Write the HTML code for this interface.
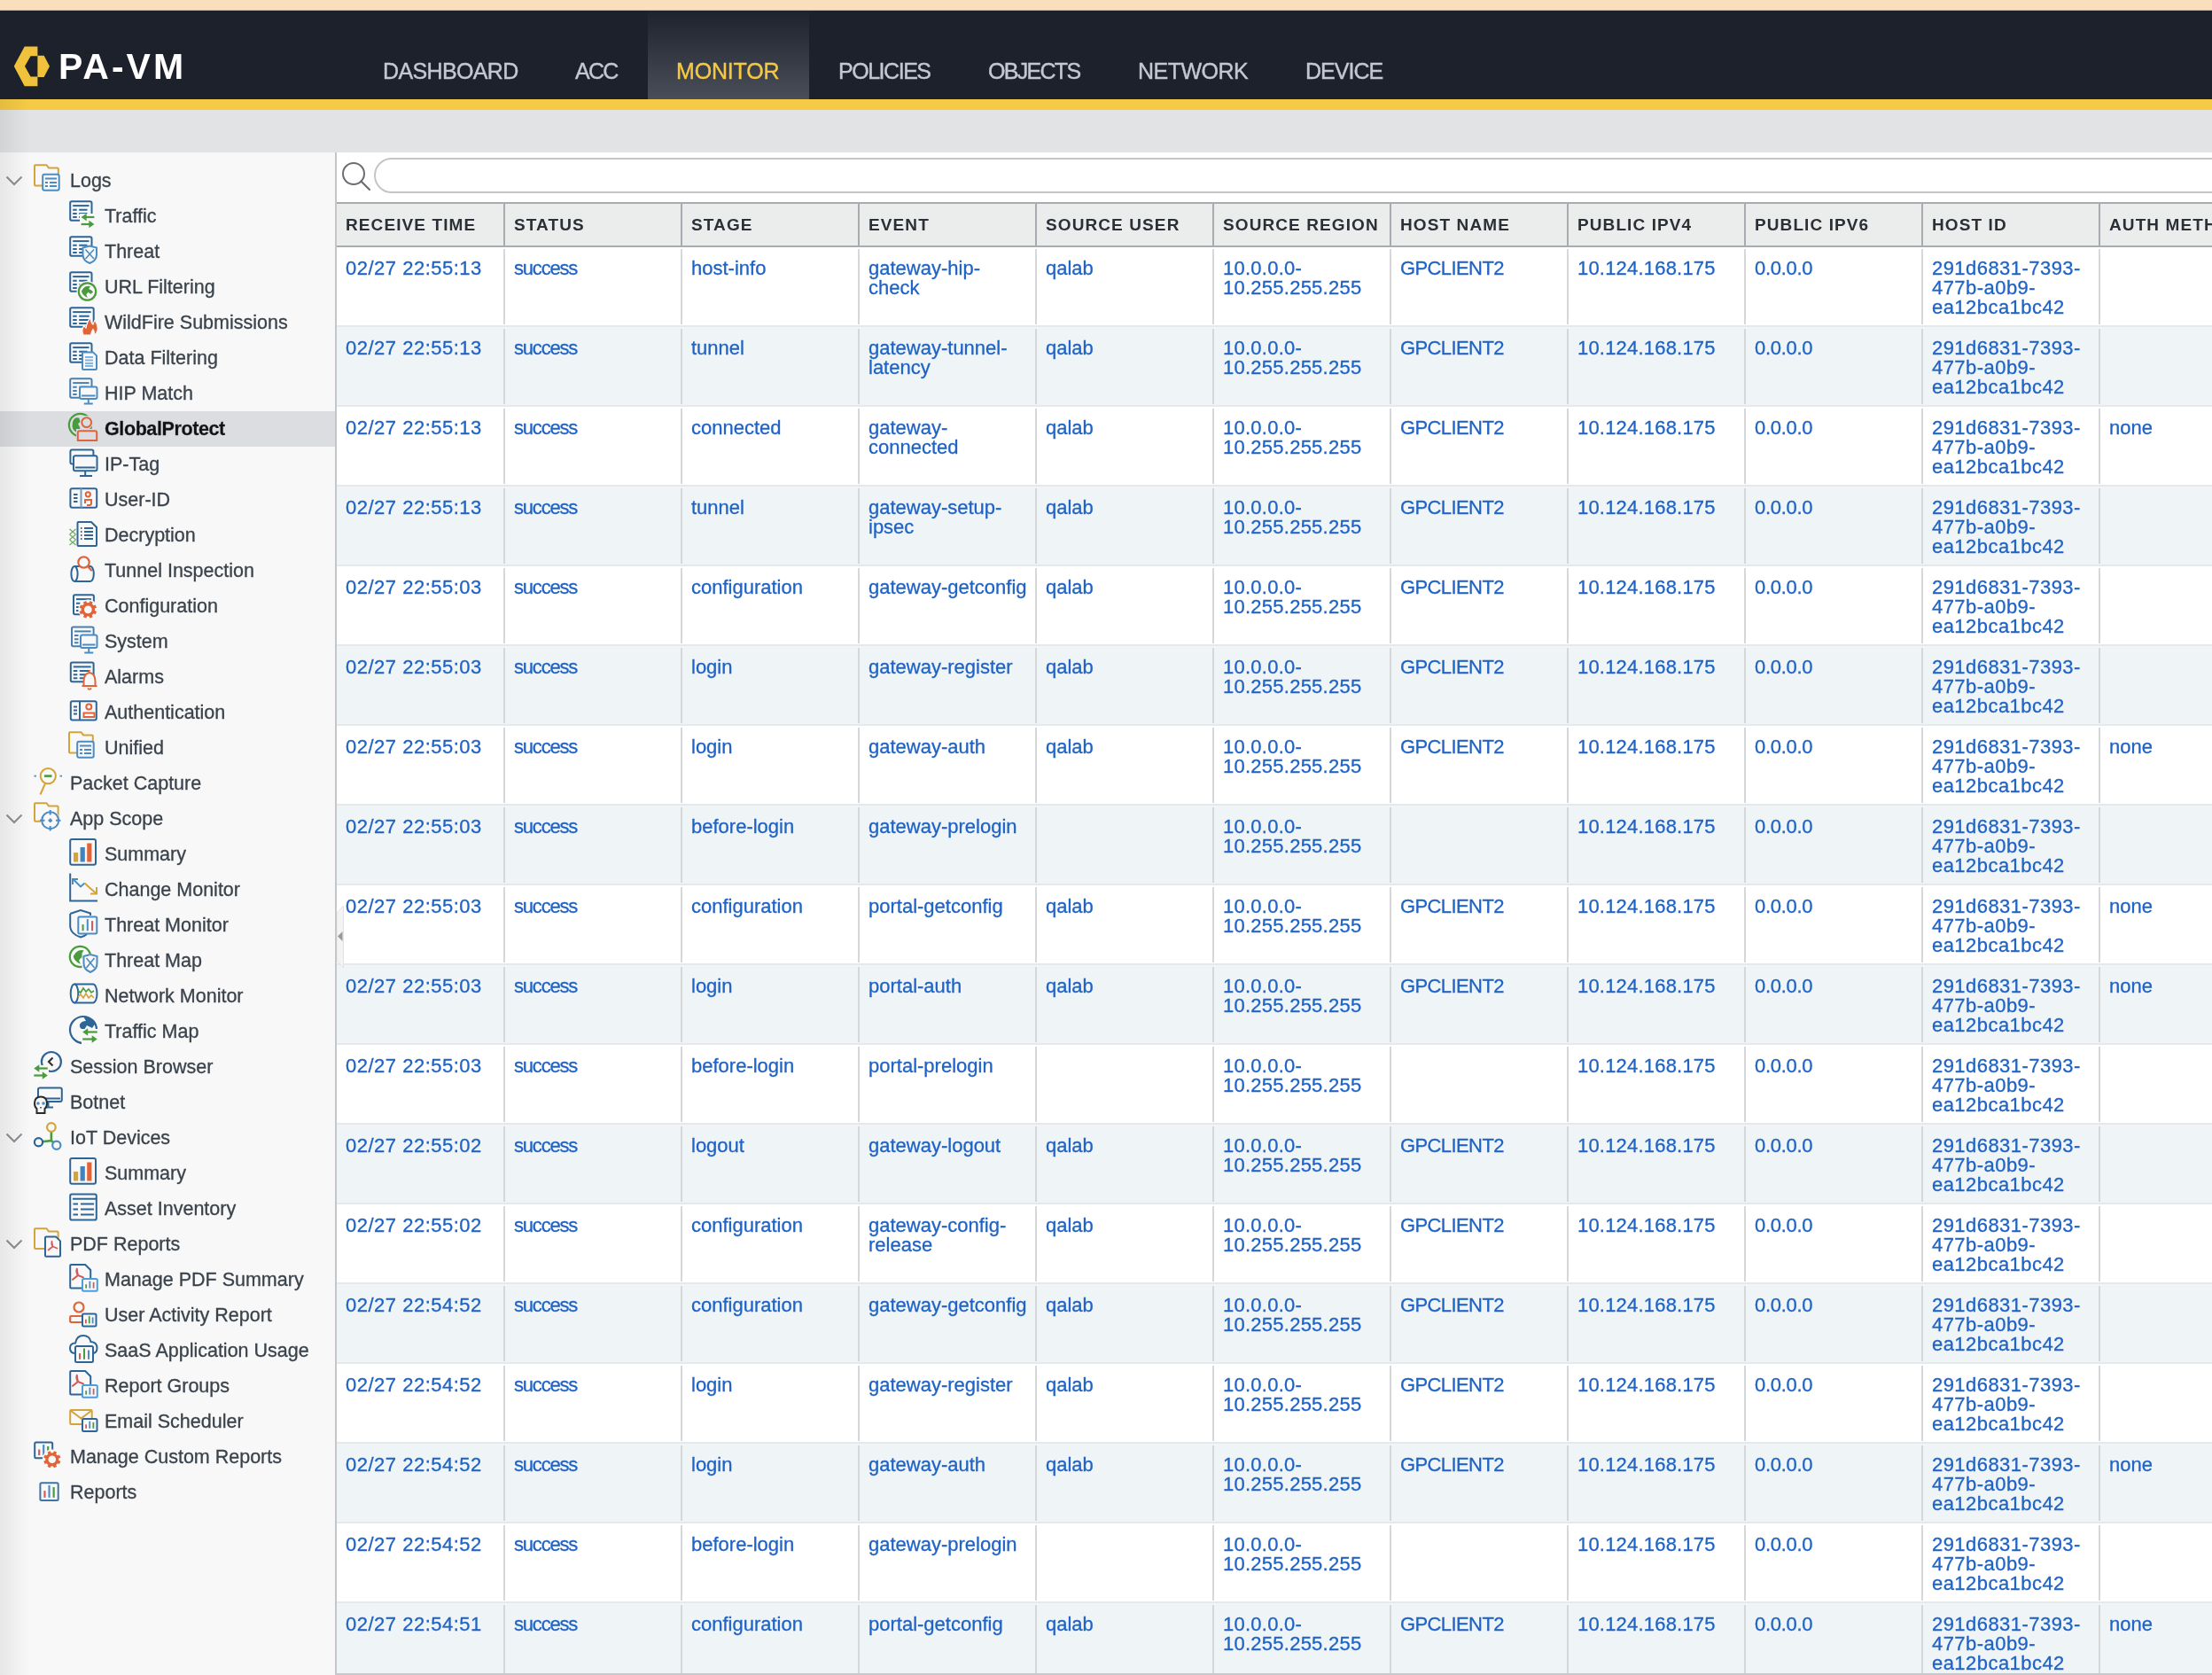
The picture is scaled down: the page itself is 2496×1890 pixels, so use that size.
<!DOCTYPE html><html><head><meta charset="utf-8"><title>PA-VM Monitor</title><style>
*{margin:0;padding:0;box-sizing:border-box}
html,body{width:2496px;height:1890px;overflow:hidden;background:#fff;font-family:"Liberation Sans",sans-serif;-webkit-font-smoothing:antialiased}
#wrap{position:absolute;left:0;top:0;width:2496px;height:1890px;will-change:transform}
.a{position:absolute}
#peach{left:0;top:0;width:2496px;height:12px;background:#f9dfbc;border-bottom:1px solid #c9b597}
#nav{left:0;top:12px;width:2496px;height:100px;background:#1c212c}
#yel{left:0;top:112px;width:2496px;height:12px;background:#f6ca44}
#gbar{left:0;top:124px;width:2496px;height:48px;background:#e2e3e5}
.nv{top:12px;height:99px;font-size:25px;color:#c4c8d1;line-height:99px;padding-top:19px;white-space:nowrap}
#act{left:731px;top:12px;width:182px;height:100px;background:linear-gradient(#1f232d 0%,#2a2f3a 30%,#3c414c 70%,#4a4e59 100%)}
#side{left:0;top:172px;width:378px;height:1718px;background:#f8f8f8}
#sshade{left:0;top:112px;width:34px;height:1778px;background:linear-gradient(90deg,rgba(0,0,0,0.07),rgba(0,0,0,0))}
#sbord{left:378px;top:172px;width:2px;height:1718px;background:#c4c6ca}
.si{height:40px;line-height:40px;font-size:21.5px;color:#3a434c;-webkit-text-stroke:0.3px #3a434c;white-space:nowrap}
.sel{background:#dcdde0}
.ic{width:36px;height:36px;overflow:visible}
.chev{left:6px;width:20px;height:12px}
.hd{top:228px;height:51px;background:#ebedec;border-top:2px solid #a8acb0;border-bottom:2px solid #a8acb0}
.hs{top:228px;width:2px;height:51px;background:#a8acb0}
.ht{top:246px;font-size:19px;font-weight:bold;color:#2b3036;letter-spacing:1.1px;white-space:nowrap;line-height:16px}
.row{left:380px;width:2116px;height:90px}
.rs{width:2px;background:#d6d7d9}
.rb{left:380px;width:2116px;height:2px;background:#e6e8ea}
.c{font-size:22px;line-height:22px;color:#1f63c5;-webkit-text-stroke:0.3px #1f63c5;white-space:nowrap}
</style></head><body>
<div id="wrap">
<div class="a" id="peach"></div><div class="a" id="nav"></div><div class="a" id="yel"></div><div class="a" id="gbar"></div>
<div class="a" id="act"></div>
<svg class="a" style="left:0;top:0" width="70" height="110" viewBox="0 0 70 110"><path d="M42.4 52.6 L27.7 52.6 L15.8 74.8 L27.7 97.2 L42.4 97.2 L42.4 86.5 L34.5 86.5 L28 74.8 L34.5 63.3 L42.4 63.3 Z" fill="#f0c23b"/><path d="M42.4 62.8 L49.6 62.8 L56 74.8 L49.6 87 L42.4 87 Z" fill="#f0c23b"/></svg>
<div class="a" style="left:66px;top:53px;font-size:41px;font-weight:bold;color:#fff;line-height:44px;letter-spacing:3px">PA-VM</div>
<div class="a nv" style="left:432px;color:#c4c8d1;letter-spacing:-0.64px;-webkit-text-stroke:0.4px #c4c8d1">DASHBOARD</div>
<div class="a nv" style="left:649px;color:#c4c8d1;letter-spacing:-1.75px;-webkit-text-stroke:0.4px #c4c8d1">ACC</div>
<div class="a nv" style="left:763px;color:#f5c843;letter-spacing:-0.17px;-webkit-text-stroke:0.4px #f5c843">MONITOR</div>
<div class="a nv" style="left:946px;color:#c4c8d1;letter-spacing:-1.47px;-webkit-text-stroke:0.4px #c4c8d1">POLICIES</div>
<div class="a nv" style="left:1115px;color:#c4c8d1;letter-spacing:-1.7px;-webkit-text-stroke:0.4px #c4c8d1">OBJECTS</div>
<div class="a nv" style="left:1284px;color:#c4c8d1;letter-spacing:-0.5px;-webkit-text-stroke:0.4px #c4c8d1">NETWORK</div>
<div class="a nv" style="left:1473px;color:#c4c8d1;letter-spacing:-0.96px;-webkit-text-stroke:0.4px #c4c8d1">DEVICE</div>
<div class="a" id="side"></div>
<svg class="a chev" style="top:198px" viewBox="0 0 20 12"><path d="M1.5 1.5 L10 10 L18.5 1.5" fill="none" stroke="#8a8f95" stroke-width="2"/></svg>
<svg class="a ic" style="left:38px;top:184px" viewBox="0 0 36 36"><path d="M27.8 25.599999999999998 V6.4 Q27.8 5.4 26.8 5.4 H17 L14.5 2.2 H2 Q1 2.2 1 3.2 V24.599999999999998 Q1 25.599999999999998 2 25.599999999999998 H27.8" fill="none" stroke="#d4a33a" stroke-width="2"/><rect x="10.2" y="12.8" width="18.5" height="18" rx="2" fill="#f8f8f8" stroke="#4b8cc4" stroke-width="2"/><path d="M13 17.5 H26 M13 22 H16 M18 22 H26 M13 26 H16 M18 26 H26" stroke="#4b8cc4" stroke-width="2"/></svg>
<div class="a si" style="left:79px;top:184px;">Logs</div>
<svg class="a ic" style="left:77px;top:224px" viewBox="0 0 36 36"><rect x="2.2" y="3.3" width="24.3" height="21.4" rx="1.8" fill="none" stroke="#2e6597" stroke-width="2"/><path d="M5.2 8.1 H23.5" stroke="#2e6597" stroke-width="2"/><path d="M5.2 12.8 H9.7 M12.2 12.8 H21.5 M5.2 16.9 H9.7 M12.2 16.9 H21.5 M5.2 21.0 H9.7 M12.2 21.0 H21.5 " stroke="#2e6597" stroke-width="2"/><rect x="13" y="17" width="20" height="16" fill="#f8f8f8"/><path d="M18.6 21 H29.4" stroke="#4a9a3e" stroke-width="2.2"/><path d="M20.6 16.8 L14.6 21 L20.6 25.2 Z" fill="#4a9a3e"/><path d="M14.6 29 H25.4" stroke="#4a9a3e" stroke-width="2.2"/><path d="M23.4 24.8 L29.4 29 L23.4 33.2 Z" fill="#4a9a3e"/></svg>
<div class="a si" style="left:118px;top:224px;">Traffic</div>
<svg class="a ic" style="left:77px;top:264px" viewBox="0 0 36 36"><rect x="2.2" y="3.3" width="24.3" height="21.4" rx="1.8" fill="none" stroke="#2e6597" stroke-width="2"/><path d="M5.2 8.1 H23.5" stroke="#2e6597" stroke-width="2"/><path d="M5.2 12.8 H9.7 M12.2 12.8 H21.5 M5.2 16.9 H9.7 M12.2 16.9 H21.5 M5.2 21.0 H9.7 M12.2 21.0 H21.5 " stroke="#2e6597" stroke-width="2"/><path d="M16.5 15.5 L24.25 13.5 L32.0 15.5 V23.25 Q32.0 30.075 24.25 33.0 Q16.5 30.075 16.5 23.25 Z" fill="#f8f8f8" stroke="#4b8cc4" stroke-width="2"/><path d="M19.5 17.5 L29.0 28.0 M29.0 17.5 L19.5 28.0" stroke="#4b8cc4" stroke-width="1.6"/></svg>
<div class="a si" style="left:118px;top:264px;">Threat</div>
<svg class="a ic" style="left:77px;top:304px" viewBox="0 0 36 36"><rect x="2.2" y="3.3" width="24.3" height="21.4" rx="1.8" fill="none" stroke="#2e6597" stroke-width="2"/><path d="M5.2 8.1 H23.5" stroke="#2e6597" stroke-width="2"/><path d="M5.2 12.8 H9.7 M12.2 12.8 H21.5 M5.2 16.9 H9.7 M12.2 16.9 H21.5 M5.2 21.0 H9.7 M12.2 21.0 H21.5 " stroke="#2e6597" stroke-width="2"/><circle cx="21.5" cy="25" r="12" fill="#f8f8f8"/><circle cx="21.5" cy="25" r="10.8" fill="#4a9a3e"/><circle cx="21.5" cy="25" r="8.600000000000001" fill="#f8f8f8"/><path d="M17.2232 21.112000000000002 Q20.7224 17.6128 24.999200000000002 19.168 L23.0552 21.8896 L26.1656 23.4448 L28.1096 25.3888 L25.387999999999998 27.7216 L22.2776 25.7776 L20.3336 28.499200000000002 L21.8888 31.9984 Q16.056800000000003 29.6656 14.8904 24.6112 Z" fill="#4a9a3e"/></svg>
<div class="a si" style="left:118px;top:304px;">URL Filtering</div>
<svg class="a ic" style="left:77px;top:344px" viewBox="0 0 36 36"><rect x="2.2" y="3.3" width="26.5" height="21.4" rx="1.8" fill="none" stroke="#2e6597" stroke-width="2"/><path d="M5.2 8.1 H25.7" stroke="#2e6597" stroke-width="2"/><path d="M5.2 12.8 H9.7 M12.2 12.8 H23.7 M5.2 16.9 H9.7 M12.2 16.9 H23.7 M5.2 21.0 H9.7 M12.2 21.0 H23.7 " stroke="#2e6597" stroke-width="2"/><path d="M17 34 Q14.5 29 17.5 23.5 L20 26 Q21 19 25.5 14 Q25 20 28 22 Q29 19 30 17.5 Q34 23 33 29 Q32 33 29 34 Q30 30 28 27.5 Q26 30 25.5 34 Z" fill="#e0643a" stroke="#f8f8f8" stroke-width="1.2"/></svg>
<div class="a si" style="left:118px;top:344px;">WildFire Submissions</div>
<svg class="a ic" style="left:77px;top:384px" viewBox="0 0 36 36"><rect x="2.2" y="3.3" width="24.3" height="21.4" rx="1.8" fill="none" stroke="#2e6597" stroke-width="2"/><path d="M5.2 8.1 H23.5" stroke="#2e6597" stroke-width="2"/><path d="M5.2 12.8 H9.7 M12.2 12.8 H21.5 M5.2 16.9 H9.7 M12.2 16.9 H21.5 M5.2 21.0 H9.7 M12.2 21.0 H21.5 " stroke="#2e6597" stroke-width="2"/><path d="M16 14.4 Q16 13.4 17 13.4 H28 L32 17.4 V31.9 Q32 32.9 31 32.9 H17 Q16 32.9 16 31.9 Z" fill="#f8f8f8" stroke="#4b8cc4" stroke-width="2"/><path d="M19 19 H28 M19 22.5 H28 M19 26 H28 M19 29 H28" stroke="#86b4dc" stroke-width="2"/></svg>
<div class="a si" style="left:118px;top:384px;">Data Filtering</div>
<svg class="a ic" style="left:77px;top:424px" viewBox="0 0 36 36"><rect x="2.2" y="3.3" width="24.3" height="21.4" rx="1.8" fill="none" stroke="#4a7fb0" stroke-width="2"/><path d="M5.2 8.1 H23.5" stroke="#4a7fb0" stroke-width="2"/><path d="M5.2 12.8 H9.7 M12.2 12.8 H21.5 M5.2 16.9 H9.7 M12.2 16.9 H21.5 M5.2 21.0 H9.7 M12.2 21.0 H21.5 " stroke="#4a7fb0" stroke-width="2"/><rect x="13" y="12.5" width="19.5" height="13.5" rx="2" fill="#f8f8f8" stroke="#4b8cc4" stroke-width="2"/><path d="M15 22.5 H30.5" stroke="#4b8cc4" stroke-width="2"/><path d="M22.75 26.0 V31.0 M17.75 31.5 H27.75" stroke="#4b8cc4" stroke-width="2"/></svg>
<div class="a si" style="left:118px;top:424px;">HIP Match</div>
<div class="a sel" style="left:0;top:464px;width:378px;height:40px"></div>
<svg class="a ic" style="left:77px;top:464px" viewBox="0 0 36 36"><circle cx="13.5" cy="15.5" r="12.6" fill="none" stroke="#4a9a3e" stroke-width="2.2"/><path d="M5 12 Q7 6 12 7.5 L14 12 L11 14 L13.5 19 L10 24 Q5 22 4.5 17 Z" fill="#4a9a3e"/><circle cx="20.7" cy="12.6" r="7.5" fill="#dcdde0"/><path d="M9 20 H34 V35 H9 Z" fill="#dcdde0"/><circle cx="20.7" cy="12.6" r="5.4" fill="none" stroke="#e0643a" stroke-width="2"/><path d="M10.8 33.0 V24.2 Q10.8 22.2 12.8 22.2 H30.200000000000003 Q32.2 22.2 32.2 24.2 V33.0 Z" fill="none" stroke="#e0643a" stroke-width="2"/></svg>
<div class="a si" style="left:118px;top:464px;font-weight:bold;color:#111;letter-spacing:-0.4px;">GlobalProtect</div>
<svg class="a ic" style="left:77px;top:504px" viewBox="0 0 36 36"><rect x="2.4" y="3.6" width="26" height="16" rx="2" fill="none" stroke="#2e6597" stroke-width="2"/><rect x="6" y="10.3" width="26.5" height="17" rx="2" fill="#f8f8f8" stroke="#2e6597" stroke-width="2"/><path d="M8 23.5 H30.5 M19.2 27.3 V32.5 M13 33 H27" stroke="#2e6597" stroke-width="2"/></svg>
<div class="a si" style="left:118px;top:504px;">IP-Tag</div>
<svg class="a ic" style="left:77px;top:544px" viewBox="0 0 36 36"><rect x="2.4" y="7.2" width="29.8" height="21.5" rx="2.2" fill="none" stroke="#2e6597" stroke-width="2"/><path d="M14.5 7.2 V28.7" stroke="#6f9cc5" stroke-width="2"/><path d="M6 14 H10.5 M6 18 H10.5 M6 22 H10.5" stroke="#2e6597" stroke-width="2"/><circle cx="22.3" cy="13.8" r="2.6" fill="none" stroke="#e0643a" stroke-width="2"/><path d="M19 24 V20 H26 V24 Q26 26 24 26 H21" fill="none" stroke="#e0643a" stroke-width="2"/></svg>
<div class="a si" style="left:118px;top:544px;">User-ID</div>
<svg class="a ic" style="left:77px;top:584px" viewBox="0 0 36 36"><path d="M10.5 6 Q10.5 5 11.5 5 H26.0 L32.0 11 V31 Q32.0 32 31.0 32 H11.5 Q10.5 32 10.5 31 Z" fill="#f8f8f8" stroke="#2e6597" stroke-width="2"/><path d="M14 12 H15.5 M18 12 H28 M14 16 H15.5 M18 16 H28 M14 20 H15.5 M18 20 H28 M14 24 H15.5 M18 24 H28" stroke="#2e6597" stroke-width="2"/><path d="M1.5 13 L8.5 19 M1.5 19 L8.5 13 M1.5 19 L8.5 25 M1.5 25 L8.5 19 M1.5 25 L8.5 31 M1.5 31 L8.5 25" stroke="#4a9a3e" stroke-width="1.2" opacity="0.8"/></svg>
<div class="a si" style="left:118px;top:584px;">Decryption</div>
<svg class="a ic" style="left:77px;top:624px" viewBox="0 0 36 36"><path d="M7 15 H25 A3.8 8.5 0 0 1 25 32 H7" fill="none" stroke="#2e6597" stroke-width="2"/><ellipse cx="7" cy="23.5" rx="3.6" ry="8.5" fill="none" stroke="#2e6597" stroke-width="2"/><circle cx="17.5" cy="10.5" r="6.2" fill="#f8f8f8" stroke="#e0643a" stroke-width="2.2"/><path d="M22 15 L26 19.5" stroke="#e0643a" stroke-width="2.2" stroke-linecap="round"/></svg>
<div class="a si" style="left:118px;top:624px;">Tunnel Inspection</div>
<svg class="a ic" style="left:77px;top:664px" viewBox="0 0 36 36"><rect x="6" y="7.3" width="22.9" height="22" rx="1.8" fill="none" stroke="#2e6597" stroke-width="2"/><path d="M9 12.1 H25.9" stroke="#2e6597" stroke-width="2"/><path d="M9 16.8 H13.5 M16 16.8 H23.9 M9 20.9 H13.5 M16 20.9 H23.9 M9 25.0 H13.5 M16 25.0 H23.9 " stroke="#2e6597" stroke-width="2"/><circle cx="22.3" cy="23.6" r="11" fill="#f8f8f8"/><circle cx="22.3" cy="23.8" r="6.08" fill="none" stroke="#e0643a" stroke-width="3.33"/><g stroke="#e0643a" stroke-width="3.53"><path d="M28.64 26.43 L31.35 27.55"/><path d="M24.93 30.14 L26.05 32.85"/><path d="M19.67 30.14 L18.55 32.85"/><path d="M15.96 26.43 L13.25 27.55"/><path d="M15.96 21.17 L13.25 20.05"/><path d="M19.67 17.46 L18.55 14.75"/><path d="M24.93 17.46 L26.05 14.75"/><path d="M28.64 21.17 L31.35 20.05"/></g></svg>
<div class="a si" style="left:118px;top:664px;">Configuration</div>
<svg class="a ic" style="left:77px;top:704px" viewBox="0 0 36 36"><rect x="4" y="3.6" width="24.6" height="21.7" rx="1.8" fill="none" stroke="#4a7fb0" stroke-width="2"/><path d="M7 8.4 H25.6" stroke="#4a7fb0" stroke-width="2"/><path d="M7 13.1 H11.5 M14 13.1 H23.6 M7 17.2 H11.5 M14 17.2 H23.6 M7 21.299999999999997 H11.5 M14 21.299999999999997 H23.6 " stroke="#4a7fb0" stroke-width="2"/><rect x="14" y="12.5" width="18.5" height="14.5" rx="2" fill="#f8f8f8" stroke="#4b8cc4" stroke-width="2"/><path d="M16 23.5 H30.5" stroke="#4b8cc4" stroke-width="2"/><path d="M23.25 27.0 V32.0 M18.25 32.5 H28.25" stroke="#4b8cc4" stroke-width="2"/></svg>
<div class="a si" style="left:118px;top:704px;">System</div>
<svg class="a ic" style="left:77px;top:744px" viewBox="0 0 36 36"><rect x="2.8" y="3.6" width="25.8" height="21.7" rx="1.8" fill="none" stroke="#2e6597" stroke-width="2"/><path d="M5.8 8.4 H25.6" stroke="#2e6597" stroke-width="2"/><path d="M5.8 13.1 H10.3 M12.8 13.1 H23.6 M5.8 17.2 H10.3 M12.8 17.2 H23.6 M5.8 21.299999999999997 H10.3 M12.8 21.299999999999997 H23.6 " stroke="#2e6597" stroke-width="2"/><path d="M24 12 V13.5 M17.5 30 V25 Q17.5 16 24 15 Q30.5 16 30.5 25 V30 Z M15.5 30 H32.5 M22 32.5 Q24 35 26 32.5" fill="#f8f8f8" stroke="#e0643a" stroke-width="2"/></svg>
<div class="a si" style="left:118px;top:744px;">Alarms</div>
<svg class="a ic" style="left:77px;top:784px" viewBox="0 0 36 36"><rect x="2.8" y="7.2" width="29" height="21.3" rx="2" fill="none" stroke="#2e6597" stroke-width="2"/><path d="M13 7.2 V28.5" stroke="#2e6597" stroke-width="2"/><path d="M6 13.5 H10 M6 17.5 H10 M6 21.5 H10" stroke="#2e6597" stroke-width="2"/><circle cx="23.3" cy="13.4" r="3" fill="none" stroke="#e0643a" stroke-width="2"/><rect x="17.5" y="20.5" width="12" height="4.5" fill="none" stroke="#e0643a" stroke-width="2"/></svg>
<div class="a si" style="left:118px;top:784px;">Authentication</div>
<svg class="a ic" style="left:77px;top:824px" viewBox="0 0 36 36"><path d="M27.8 25.599999999999998 V6.4 Q27.8 5.4 26.8 5.4 H17 L14.5 2.2 H2 Q1 2.2 1 3.2 V24.599999999999998 Q1 25.599999999999998 2 25.599999999999998 H27.8" fill="none" stroke="#d4a33a" stroke-width="2"/><rect x="10.2" y="12.8" width="18.5" height="18" rx="2" fill="#f8f8f8" stroke="#4b8cc4" stroke-width="2"/><path d="M13 17.5 H26 M13 22 H16 M18 22 H26 M13 26 H16 M18 26 H26" stroke="#4b8cc4" stroke-width="2"/></svg>
<div class="a si" style="left:118px;top:824px;">Unified</div>
<svg class="a ic" style="left:38px;top:864px" viewBox="0 0 36 36"><circle cx="16.3" cy="11.6" r="8.6" fill="none" stroke="#d4a33a" stroke-width="2"/><path d="M12 11.6 H20.5" stroke="#4a9a3e" stroke-width="2.6"/><path d="M0.5 11.6 H3 M29.5 11.6 H32" stroke="#4b8cc4" stroke-width="1.8"/><path d="M13 20 L7.5 32.5" stroke="#d4a33a" stroke-width="2"/></svg>
<div class="a si" style="left:79px;top:864px;">Packet Capture</div>
<svg class="a chev" style="top:918px" viewBox="0 0 20 12"><path d="M1.5 1.5 L10 10 L18.5 1.5" fill="none" stroke="#8a8f95" stroke-width="2"/></svg>
<svg class="a ic" style="left:38px;top:904px" viewBox="0 0 36 36"><path d="M27.6 22.7 V6.4 Q27.6 5.4 26.6 5.4 H17 L14.5 2.2 H2 Q1 2.2 1 3.2 V21.7 Q1 22.7 2 22.7 H27.6" fill="none" stroke="#d4a33a" stroke-width="2"/><circle cx="18.7" cy="21.7" r="11" fill="#f8f8f8"/><circle cx="18.7" cy="21.7" r="9.5" fill="none" stroke="#4b8cc4" stroke-width="2"/><path d="M18.7 10 V15.5 M18.7 28 V33.5 M7 21.7 H12.5 M25 21.7 H30.5 M16.5 21.7 H21 M18.7 19.5 V24" stroke="#4b8cc4" stroke-width="2"/></svg>
<div class="a si" style="left:79px;top:904px;">App Scope</div>
<svg class="a ic" style="left:77px;top:944px" viewBox="0 0 36 36"><rect x="2.2" y="3" width="28.8" height="28.8" rx="2" fill="none" stroke="#2e6597" stroke-width="2"/><rect x="6" y="18" width="5.2" height="10.5" fill="#d4a33a"/><rect x="13.6" y="12" width="5.2" height="16.5" fill="#3d85c0"/><rect x="21.2" y="7.5" width="5.2" height="21" fill="#e0643a"/></svg>
<div class="a si" style="left:118px;top:944px;">Summary</div>
<svg class="a ic" style="left:77px;top:984px" viewBox="0 0 36 36"><path d="M2.2 1.5 V32.6 H33" fill="none" stroke="#2e6597" stroke-width="2"/><path d="M5.5 8 L14 16.5 L18.5 12.5" fill="none" stroke="#4b8cc4" stroke-width="2"/><path d="M5 14 V8 H11" fill="none" stroke="#4b8cc4" stroke-width="2"/><path d="M18.5 12.5 L24.5 18 L32 24.5" fill="none" stroke="#d4a33a" stroke-width="2"/><path d="M32 17 V24.5 H25" fill="none" stroke="#d4a33a" stroke-width="2"/></svg>
<div class="a si" style="left:118px;top:984px;">Change Monitor</div>
<svg class="a ic" style="left:77px;top:1024px" viewBox="0 0 36 36"><path d="M2.2 7 L14 3 L25 6.5 V9 M2.2 7 V22 Q3 30 14 33.5 Q19 32 21 30" fill="none" stroke="#2e6597" stroke-width="2"/><rect x="11.3" y="10.5" width="21" height="19" rx="1.5" fill="#f8f8f8" stroke="#4b8cc4" stroke-width="2"/><path d="M16.55 26.3 V19.04" stroke="#4a9a3e" stroke-width="2"/><path d="M21.8 26.3 V13.100000000000001" stroke="#4b8cc4" stroke-width="2"/><path d="M27.05 26.3 V15.080000000000002" stroke="#d45a5a" stroke-width="2"/></svg>
<div class="a si" style="left:118px;top:1024px;">Threat Monitor</div>
<svg class="a ic" style="left:77px;top:1064px" viewBox="0 0 36 36"><circle cx="13.5" cy="15.5" r="12.8" fill="#4a9a3e"/><circle cx="13.5" cy="15.5" r="10.600000000000001" fill="#f8f8f8"/><path d="M8.4312 10.892 Q12.5784 6.7448 17.6472 8.588 L15.3432 11.8136 L19.0296 13.6568 L21.3336 15.9608 L18.108 18.7256 L14.4216 16.4216 L12.1176 19.6472 L13.9608 23.794400000000003 Q7.048800000000001 21.0296 5.666399999999999 15.0392 Z" fill="#4a9a3e"/><path d="M15.5 12 H34 V34.5 H15.5 Z" fill="#f8f8f8"/><path d="M17.5 15 L25.0 13 L32.5 15 V23.0 Q32.5 30.0 25.0 33 Q17.5 30.0 17.5 23.0 Z" fill="#f8f8f8" stroke="#4b8cc4" stroke-width="2"/><path d="M20.5 17 L29.5 28 M29.5 17 L20.5 28" stroke="#4b8cc4" stroke-width="1.6"/></svg>
<div class="a si" style="left:118px;top:1064px;">Threat Map</div>
<svg class="a ic" style="left:77px;top:1104px" viewBox="0 0 36 36"><path d="M7 6.5 H28 A4.5 10.5 0 0 1 28 27.5 H7" fill="none" stroke="#2e6597" stroke-width="2"/><ellipse cx="7" cy="17" rx="4.3" ry="10.5" fill="none" stroke="#2e6597" stroke-width="2"/><path d="M11 14 L14 16 L17 11 L20 15 L23 12 L26 16 L29 14" fill="none" stroke="#4a9a3e" stroke-width="1.6"/><path d="M11 21 L14 18 L17 22 L20 17 L23 22 L26 19 L29 22" fill="none" stroke="#d4a33a" stroke-width="1.6"/></svg>
<div class="a si" style="left:118px;top:1104px;">Network Monitor</div>
<svg class="a ic" style="left:77px;top:1144px" viewBox="0 0 36 36"><circle cx="17" cy="18" r="15" fill="none" stroke="#2e6597" stroke-width="2.2"/><path d="M17 3 Q26 3 30.5 11 L27 16 L21 13 L18 18 Q12 17 13 12 Q15 8 20 8 Z" fill="#2e6597"/><rect x="15" y="17" width="19" height="17" fill="#f8f8f8"/><path d="M20.2 20.5 H32.7" stroke="#4a9a3e" stroke-width="2.2"/><path d="M22.2 16.3 L16.2 20.5 L22.2 24.7 Z" fill="#4a9a3e"/><path d="M16.2 28.5 H28.700000000000003" stroke="#4a9a3e" stroke-width="2.2"/><path d="M26.700000000000003 24.3 L32.7 28.5 L26.700000000000003 32.7 Z" fill="#4a9a3e"/></svg>
<div class="a si" style="left:118px;top:1144px;">Traffic Map</div>
<svg class="a ic" style="left:38px;top:1184px" viewBox="0 0 36 36"><circle cx="19.9" cy="14" r="11" fill="none" stroke="#2e6597" stroke-width="2.2"/><path d="M21.5 9.5 L17 14 L21.5 18.5" fill="none" stroke="#333" stroke-width="2.2"/><rect x="0" y="18" width="17" height="16" fill="#f8f8f8"/><path d="M4.3 21.5 H15.8" stroke="#4a9a3e" stroke-width="2.2"/><path d="M6.3 17.3 L0.3 21.5 L6.3 25.7 Z" fill="#4a9a3e"/><path d="M0.3 29.5 H11.8" stroke="#4a9a3e" stroke-width="2.2"/><path d="M9.8 25.3 L15.8 29.5 L9.8 33.7 Z" fill="#4a9a3e"/></svg>
<div class="a si" style="left:79px;top:1184px;">Session Browser</div>
<svg class="a ic" style="left:38px;top:1224px" viewBox="0 0 36 36"><rect x="5" y="3.6" width="26.8" height="15.5" rx="2" fill="none" stroke="#2e6597" stroke-width="2"/><path d="M7 15.5 H30 M16.5 19 V25 M13 25.5 H22" stroke="#2e6597" stroke-width="2"/><path d="M8 13.5 Q1 13.5 1 21 Q1 25 3.5 27 V32 H12.5 V27 Q15 25 15 21 Q15 13.5 8 13.5 Z" fill="#f8f8f8" stroke="#2a2a2a" stroke-width="2"/><circle cx="5" cy="21" r="1.8" fill="#4b8cc4"/><circle cx="11" cy="21" r="1.8" fill="#4b8cc4"/><path d="M8 25 V26.5" stroke="#2a2a2a" stroke-width="1.5"/></svg>
<div class="a si" style="left:79px;top:1224px;">Botnet</div>
<svg class="a chev" style="top:1278px" viewBox="0 0 20 12"><path d="M1.5 1.5 L10 10 L18.5 1.5" fill="none" stroke="#8a8f95" stroke-width="2"/></svg>
<svg class="a ic" style="left:38px;top:1264px" viewBox="0 0 36 36"><path d="M19.9 13 V23 L5.5 24.7 M19.9 23 L25.8 28.3" fill="none" stroke="#4a9a3e" stroke-width="2.6"/><circle cx="19.9" cy="8" r="4.8" fill="#f8f8f8" stroke="#d4a33a" stroke-width="2.2"/><circle cx="5.5" cy="24.7" r="4.6" fill="#f8f8f8" stroke="#2e6597" stroke-width="2.2"/><circle cx="25.8" cy="28.3" r="4.6" fill="#f8f8f8" stroke="#4b8cc4" stroke-width="2.2"/></svg>
<div class="a si" style="left:79px;top:1264px;">IoT Devices</div>
<svg class="a ic" style="left:77px;top:1304px" viewBox="0 0 36 36"><rect x="2.2" y="3" width="28.8" height="28.8" rx="2" fill="none" stroke="#2e6597" stroke-width="2"/><rect x="6" y="18" width="5.2" height="10.5" fill="#d4a33a"/><rect x="13.6" y="12" width="5.2" height="16.5" fill="#3d85c0"/><rect x="21.2" y="7.5" width="5.2" height="21" fill="#e0643a"/></svg>
<div class="a si" style="left:118px;top:1304px;">Summary</div>
<svg class="a ic" style="left:77px;top:1344px" viewBox="0 0 36 36"><rect x="2.2" y="3.6" width="29.6" height="29" rx="1.8" fill="none" stroke="#2e6597" stroke-width="2"/><path d="M5 8.8 H31 M5.5 14.5 H11 M14 14.5 H29 M5.5 20.5 H11 M14 20.5 H29 M5.5 26.5 H11 M14 26.5 H29" stroke="#2e6597" stroke-width="2"/></svg>
<div class="a si" style="left:118px;top:1344px;">Asset Inventory</div>
<svg class="a chev" style="top:1398px" viewBox="0 0 20 12"><path d="M1.5 1.5 L10 10 L18.5 1.5" fill="none" stroke="#8a8f95" stroke-width="2"/></svg>
<svg class="a ic" style="left:38px;top:1384px" viewBox="0 0 36 36"><path d="M27.6 25.0 V6.4 Q27.6 5.4 26.6 5.4 H17 L14.5 2.2 H2 Q1 2.2 1 3.2 V24.0 Q1 25.0 2 25.0 H27.6" fill="none" stroke="#d4a33a" stroke-width="2"/><path d="M13 12.4 Q13 11.4 14 11.4 H25 L30 16.4 V32.7 Q30 33.7 29 33.7 H14 Q13 33.7 13 32.7 Z" fill="#f8f8f8" stroke="#2e6597" stroke-width="2"/><path d="M20.5 16.5 Q19.5 19.5 21.5 22.5 L16.5 26.5 M21.5 22.5 L26.5 24.5 M21.5 22.5 Q20.5 18.5 20.5 16.5" fill="none" stroke="#d45a5a" stroke-width="1.70" stroke-linecap="round"/></svg>
<div class="a si" style="left:79px;top:1384px;">PDF Reports</div>
<svg class="a ic" style="left:77px;top:1424px" viewBox="0 0 36 36"><path d="M2.2 4 Q2.2 3 3.2 3 H19.2 L25.2 9 V28.5 Q25.2 29.5 24.2 29.5 H3.2 Q2.2 29.5 2.2 28.5 Z" fill="#f8f8f8" stroke="#2e6597" stroke-width="2"/><path d="M9.8 7.800000000000001 Q8.6 11.4 11 15 L5.0 19.8 M11 15 L17.0 17.4 M11 15 Q9.8 10.2 9.8 7.800000000000001" fill="none" stroke="#d45a5a" stroke-width="2.04" stroke-linecap="round"/><rect x="16" y="19" width="16.8" height="13.8" rx="1.5" fill="#f8f8f8" stroke="#4a9ee0" stroke-width="2"/><path d="M20.2 29.599999999999998 V25.199999999999996" stroke="#4a9a3e" stroke-width="1.8"/><path d="M24.4 29.599999999999998 V21.599999999999998" stroke="#4b8cc4" stroke-width="1.8"/><path d="M28.6 29.599999999999998 V22.799999999999997" stroke="#d45a5a" stroke-width="1.8"/></svg>
<div class="a si" style="left:118px;top:1424px;">Manage PDF Summary</div>
<svg class="a ic" style="left:77px;top:1464px" viewBox="0 0 36 36"><circle cx="12" cy="11" r="5.5" fill="none" stroke="#e0643a" stroke-width="2.2"/><path d="M2.2 28 V22 Q2.2 21 3.2 21 H20 M2.2 28 H16" fill="none" stroke="#e0643a" stroke-width="2.2"/><rect x="16" y="18.5" width="15.5" height="14" rx="1.5" fill="#f8f8f8" stroke="#2e6597" stroke-width="2"/><path d="M19.875 29.3 V24.79" stroke="#d45a5a" stroke-width="1.8"/><path d="M23.75 29.3 V21.1" stroke="#4a9a3e" stroke-width="1.8"/><path d="M27.625 29.3 V22.330000000000002" stroke="#4b8cc4" stroke-width="1.8"/></svg>
<div class="a si" style="left:118px;top:1464px;">User Activity Report</div>
<svg class="a ic" style="left:77px;top:1504px" viewBox="0 0 36 36"><path d="M8 23 Q2 23 2 17 Q2 11.5 8 11.5 Q9.5 3 17 3 Q24 3 25.5 10 Q32.5 10.5 32.5 17 Q32.5 23 27 23" fill="none" stroke="#2e6597" stroke-width="2"/><rect x="8" y="15" width="20" height="18" rx="1.5" fill="#f8f8f8" stroke="#2e6597" stroke-width="2"/><path d="M13.0 29.8 V23.09" stroke="#d45a5a" stroke-width="2"/><path d="M18.0 29.8 V17.6" stroke="#4a9a3e" stroke-width="2"/><path d="M23.0 29.8 V19.43" stroke="#4b8cc4" stroke-width="2"/></svg>
<div class="a si" style="left:118px;top:1504px;">SaaS Application Usage</div>
<svg class="a ic" style="left:77px;top:1544px" viewBox="0 0 36 36"><path d="M2.2 4 Q2.2 3 3.2 3 H19.2 L25.2 9 V28.5 Q25.2 29.5 24.2 29.5 H3.2 Q2.2 29.5 2.2 28.5 Z" fill="#f8f8f8" stroke="#2e6597" stroke-width="2"/><path d="M9.8 7.800000000000001 Q8.6 11.4 11 15 L5.0 19.8 M11 15 L17.0 17.4 M11 15 Q9.8 10.2 9.8 7.800000000000001" fill="none" stroke="#d45a5a" stroke-width="2.04" stroke-linecap="round"/><rect x="16" y="19" width="16.8" height="13.8" rx="1.5" fill="#f8f8f8" stroke="#4a9ee0" stroke-width="2"/><path d="M20.2 29.599999999999998 V25.199999999999996" stroke="#4a9a3e" stroke-width="1.8"/><path d="M24.4 29.599999999999998 V21.599999999999998" stroke="#4b8cc4" stroke-width="1.8"/><path d="M28.6 29.599999999999998 V22.799999999999997" stroke="#d45a5a" stroke-width="1.8"/></svg>
<div class="a si" style="left:118px;top:1544px;">Report Groups</div>
<svg class="a ic" style="left:77px;top:1584px" viewBox="0 0 36 36"><rect x="2.2" y="7" width="24.5" height="16" rx="1" fill="none" stroke="#d4a33a" stroke-width="2"/><path d="M2.5 7.5 L14.5 16.5 L26.5 7.5" fill="none" stroke="#d4a33a" stroke-width="2"/><rect x="16" y="17" width="16.5" height="14" rx="1.5" fill="#f8f8f8" stroke="#2e6597" stroke-width="2"/><path d="M20.125 27.8 V23.29" stroke="#d45a5a" stroke-width="1.8"/><path d="M24.25 27.8 V19.6" stroke="#4b8cc4" stroke-width="1.8"/><path d="M28.375 27.8 V20.830000000000002" stroke="#4a9a3e" stroke-width="1.8"/></svg>
<div class="a si" style="left:118px;top:1584px;">Email Scheduler</div>
<svg class="a ic" style="left:38px;top:1624px" viewBox="0 0 36 36"><rect x="1.2" y="3.5" width="20" height="17.8" rx="1.5" fill="#f8f8f8" stroke="#2e6597" stroke-width="2"/><path d="M6.2 18.1 V11.5" stroke="#d45a5a" stroke-width="2.2"/><path d="M11.2 18.1 V6.100000000000001" stroke="#4b8cc4" stroke-width="2.2"/><path d="M16.2 18.1 V7.900000000000002" stroke="#4a9a3e" stroke-width="2.2"/><circle cx="20.8" cy="22.6" r="11" fill="#f8f8f8"/><circle cx="20.8" cy="22.8" r="5.95" fill="none" stroke="#e0643a" stroke-width="3.26"/><g stroke="#e0643a" stroke-width="3.46"><path d="M27.01 25.37 L29.67 26.47"/><path d="M23.37 29.01 L24.47 31.67"/><path d="M18.23 29.01 L17.13 31.67"/><path d="M14.59 25.37 L11.93 26.47"/><path d="M14.59 20.23 L11.93 19.13"/><path d="M18.23 16.59 L17.13 13.93"/><path d="M23.37 16.59 L24.47 13.93"/><path d="M27.01 20.23 L29.67 19.13"/></g></svg>
<div class="a si" style="left:79px;top:1624px;">Manage Custom Reports</div>
<svg class="a ic" style="left:38px;top:1664px" viewBox="0 0 36 36"><rect x="7.4" y="9.3" width="20.3" height="19.7" rx="1.5" fill="#f8f8f8" stroke="#3f74a6" stroke-width="2"/><path d="M12.475000000000001 25.8 V18.155" stroke="#d45a5a" stroke-width="2.2"/><path d="M17.55 25.8 V11.900000000000002" stroke="#4b8cc4" stroke-width="2.2"/><path d="M22.625 25.8 V13.985000000000003" stroke="#4a9a3e" stroke-width="2.2"/></svg>
<div class="a si" style="left:79px;top:1664px;">Reports</div>
<div class="a" id="sshade"></div>
<div class="a" id="sbord"></div>
<svg class="a" style="left:384px;top:181px" width="36" height="36" viewBox="0 0 36 36"><circle cx="15" cy="15" r="12" fill="none" stroke="#6a6e73" stroke-width="2"/><path d="M23.5 23.5 L33 33" stroke="#6a6e73" stroke-width="2.2" stroke-linecap="round"/></svg>
<div class="a" style="left:422px;top:178px;width:2200px;height:40px;border:2px solid #c3c5c8;border-radius:20px;background:#fff"></div>
<div class="a hd" style="left:380px;width:2116px"></div>
<div class="a ht" style="left:390px">RECEIVE TIME</div>
<div class="a hs" style="left:568px"></div>
<div class="a ht" style="left:580px">STATUS</div>
<div class="a hs" style="left:768px"></div>
<div class="a ht" style="left:780px">STAGE</div>
<div class="a hs" style="left:968px"></div>
<div class="a ht" style="left:980px">EVENT</div>
<div class="a hs" style="left:1168px"></div>
<div class="a ht" style="left:1180px">SOURCE USER</div>
<div class="a hs" style="left:1368px"></div>
<div class="a ht" style="left:1380px">SOURCE REGION</div>
<div class="a hs" style="left:1568px"></div>
<div class="a ht" style="left:1580px">HOST NAME</div>
<div class="a hs" style="left:1768px"></div>
<div class="a ht" style="left:1780px">PUBLIC IPV4</div>
<div class="a hs" style="left:1968px"></div>
<div class="a ht" style="left:1980px">PUBLIC IPV6</div>
<div class="a hs" style="left:2168px"></div>
<div class="a ht" style="left:2180px">HOST ID</div>
<div class="a hs" style="left:2368px"></div>
<div class="a ht" style="left:2380px">AUTH METHOD</div>
<div class="a row" style="top:279px;background:#ffffff"></div>
<div class="a rb" style="top:367px"></div>
<div class="a rs" style="left:568px;top:281px;height:85px"></div>
<div class="a rs" style="left:768px;top:281px;height:85px"></div>
<div class="a rs" style="left:968px;top:281px;height:85px"></div>
<div class="a rs" style="left:1168px;top:281px;height:85px"></div>
<div class="a rs" style="left:1368px;top:281px;height:85px"></div>
<div class="a rs" style="left:1568px;top:281px;height:85px"></div>
<div class="a rs" style="left:1768px;top:281px;height:85px"></div>
<div class="a rs" style="left:1968px;top:281px;height:85px"></div>
<div class="a rs" style="left:2168px;top:281px;height:85px"></div>
<div class="a rs" style="left:2368px;top:281px;height:85px"></div>
<div class="a c" style="left:390px;top:292px;letter-spacing:0.5px;">02/27 22:55:13</div>
<div class="a c" style="left:580px;top:292px;letter-spacing:-1.2px;">success</div>
<div class="a c" style="left:780px;top:292px;">host-info</div>
<div class="a c" style="left:980px;top:292px;">gateway-hip-<br>check</div>
<div class="a c" style="left:1180px;top:292px;">qalab</div>
<div class="a c" style="left:1380px;top:292px;letter-spacing:0.25px;">10.0.0.0-<br>10.255.255.255</div>
<div class="a c" style="left:1580px;top:292px;letter-spacing:-0.6px;">GPCLIENT2</div>
<div class="a c" style="left:1780px;top:292px;letter-spacing:0.2px;">10.124.168.175</div>
<div class="a c" style="left:1980px;top:292px;letter-spacing:-0.3px;">0.0.0.0</div>
<div class="a c" style="left:2180px;top:292px;letter-spacing:0.45px;">291d6831-7393-<br>477b-a0b9-<br>ea12bca1bc42</div>
<div class="a row" style="top:369px;background:#eff4f7"></div>
<div class="a rb" style="top:457px"></div>
<div class="a rs" style="left:568px;top:371px;height:85px"></div>
<div class="a rs" style="left:768px;top:371px;height:85px"></div>
<div class="a rs" style="left:968px;top:371px;height:85px"></div>
<div class="a rs" style="left:1168px;top:371px;height:85px"></div>
<div class="a rs" style="left:1368px;top:371px;height:85px"></div>
<div class="a rs" style="left:1568px;top:371px;height:85px"></div>
<div class="a rs" style="left:1768px;top:371px;height:85px"></div>
<div class="a rs" style="left:1968px;top:371px;height:85px"></div>
<div class="a rs" style="left:2168px;top:371px;height:85px"></div>
<div class="a rs" style="left:2368px;top:371px;height:85px"></div>
<div class="a c" style="left:390px;top:382px;letter-spacing:0.5px;">02/27 22:55:13</div>
<div class="a c" style="left:580px;top:382px;letter-spacing:-1.2px;">success</div>
<div class="a c" style="left:780px;top:382px;">tunnel</div>
<div class="a c" style="left:980px;top:382px;">gateway-tunnel-<br>latency</div>
<div class="a c" style="left:1180px;top:382px;">qalab</div>
<div class="a c" style="left:1380px;top:382px;letter-spacing:0.25px;">10.0.0.0-<br>10.255.255.255</div>
<div class="a c" style="left:1580px;top:382px;letter-spacing:-0.6px;">GPCLIENT2</div>
<div class="a c" style="left:1780px;top:382px;letter-spacing:0.2px;">10.124.168.175</div>
<div class="a c" style="left:1980px;top:382px;letter-spacing:-0.3px;">0.0.0.0</div>
<div class="a c" style="left:2180px;top:382px;letter-spacing:0.45px;">291d6831-7393-<br>477b-a0b9-<br>ea12bca1bc42</div>
<div class="a row" style="top:459px;background:#ffffff"></div>
<div class="a rb" style="top:547px"></div>
<div class="a rs" style="left:568px;top:461px;height:85px"></div>
<div class="a rs" style="left:768px;top:461px;height:85px"></div>
<div class="a rs" style="left:968px;top:461px;height:85px"></div>
<div class="a rs" style="left:1168px;top:461px;height:85px"></div>
<div class="a rs" style="left:1368px;top:461px;height:85px"></div>
<div class="a rs" style="left:1568px;top:461px;height:85px"></div>
<div class="a rs" style="left:1768px;top:461px;height:85px"></div>
<div class="a rs" style="left:1968px;top:461px;height:85px"></div>
<div class="a rs" style="left:2168px;top:461px;height:85px"></div>
<div class="a rs" style="left:2368px;top:461px;height:85px"></div>
<div class="a c" style="left:390px;top:472px;letter-spacing:0.5px;">02/27 22:55:13</div>
<div class="a c" style="left:580px;top:472px;letter-spacing:-1.2px;">success</div>
<div class="a c" style="left:780px;top:472px;">connected</div>
<div class="a c" style="left:980px;top:472px;">gateway-<br>connected</div>
<div class="a c" style="left:1180px;top:472px;">qalab</div>
<div class="a c" style="left:1380px;top:472px;letter-spacing:0.25px;">10.0.0.0-<br>10.255.255.255</div>
<div class="a c" style="left:1580px;top:472px;letter-spacing:-0.6px;">GPCLIENT2</div>
<div class="a c" style="left:1780px;top:472px;letter-spacing:0.2px;">10.124.168.175</div>
<div class="a c" style="left:1980px;top:472px;letter-spacing:-0.3px;">0.0.0.0</div>
<div class="a c" style="left:2180px;top:472px;letter-spacing:0.45px;">291d6831-7393-<br>477b-a0b9-<br>ea12bca1bc42</div>
<div class="a c" style="left:2380px;top:472px;">none</div>
<div class="a row" style="top:549px;background:#eff4f7"></div>
<div class="a rb" style="top:637px"></div>
<div class="a rs" style="left:568px;top:551px;height:85px"></div>
<div class="a rs" style="left:768px;top:551px;height:85px"></div>
<div class="a rs" style="left:968px;top:551px;height:85px"></div>
<div class="a rs" style="left:1168px;top:551px;height:85px"></div>
<div class="a rs" style="left:1368px;top:551px;height:85px"></div>
<div class="a rs" style="left:1568px;top:551px;height:85px"></div>
<div class="a rs" style="left:1768px;top:551px;height:85px"></div>
<div class="a rs" style="left:1968px;top:551px;height:85px"></div>
<div class="a rs" style="left:2168px;top:551px;height:85px"></div>
<div class="a rs" style="left:2368px;top:551px;height:85px"></div>
<div class="a c" style="left:390px;top:562px;letter-spacing:0.5px;">02/27 22:55:13</div>
<div class="a c" style="left:580px;top:562px;letter-spacing:-1.2px;">success</div>
<div class="a c" style="left:780px;top:562px;">tunnel</div>
<div class="a c" style="left:980px;top:562px;">gateway-setup-<br>ipsec</div>
<div class="a c" style="left:1180px;top:562px;">qalab</div>
<div class="a c" style="left:1380px;top:562px;letter-spacing:0.25px;">10.0.0.0-<br>10.255.255.255</div>
<div class="a c" style="left:1580px;top:562px;letter-spacing:-0.6px;">GPCLIENT2</div>
<div class="a c" style="left:1780px;top:562px;letter-spacing:0.2px;">10.124.168.175</div>
<div class="a c" style="left:1980px;top:562px;letter-spacing:-0.3px;">0.0.0.0</div>
<div class="a c" style="left:2180px;top:562px;letter-spacing:0.45px;">291d6831-7393-<br>477b-a0b9-<br>ea12bca1bc42</div>
<div class="a row" style="top:639px;background:#ffffff"></div>
<div class="a rb" style="top:727px"></div>
<div class="a rs" style="left:568px;top:641px;height:85px"></div>
<div class="a rs" style="left:768px;top:641px;height:85px"></div>
<div class="a rs" style="left:968px;top:641px;height:85px"></div>
<div class="a rs" style="left:1168px;top:641px;height:85px"></div>
<div class="a rs" style="left:1368px;top:641px;height:85px"></div>
<div class="a rs" style="left:1568px;top:641px;height:85px"></div>
<div class="a rs" style="left:1768px;top:641px;height:85px"></div>
<div class="a rs" style="left:1968px;top:641px;height:85px"></div>
<div class="a rs" style="left:2168px;top:641px;height:85px"></div>
<div class="a rs" style="left:2368px;top:641px;height:85px"></div>
<div class="a c" style="left:390px;top:652px;letter-spacing:0.5px;">02/27 22:55:03</div>
<div class="a c" style="left:580px;top:652px;letter-spacing:-1.2px;">success</div>
<div class="a c" style="left:780px;top:652px;">configuration</div>
<div class="a c" style="left:980px;top:652px;">gateway-getconfig</div>
<div class="a c" style="left:1180px;top:652px;">qalab</div>
<div class="a c" style="left:1380px;top:652px;letter-spacing:0.25px;">10.0.0.0-<br>10.255.255.255</div>
<div class="a c" style="left:1580px;top:652px;letter-spacing:-0.6px;">GPCLIENT2</div>
<div class="a c" style="left:1780px;top:652px;letter-spacing:0.2px;">10.124.168.175</div>
<div class="a c" style="left:1980px;top:652px;letter-spacing:-0.3px;">0.0.0.0</div>
<div class="a c" style="left:2180px;top:652px;letter-spacing:0.45px;">291d6831-7393-<br>477b-a0b9-<br>ea12bca1bc42</div>
<div class="a row" style="top:729px;background:#eff4f7"></div>
<div class="a rb" style="top:817px"></div>
<div class="a rs" style="left:568px;top:731px;height:85px"></div>
<div class="a rs" style="left:768px;top:731px;height:85px"></div>
<div class="a rs" style="left:968px;top:731px;height:85px"></div>
<div class="a rs" style="left:1168px;top:731px;height:85px"></div>
<div class="a rs" style="left:1368px;top:731px;height:85px"></div>
<div class="a rs" style="left:1568px;top:731px;height:85px"></div>
<div class="a rs" style="left:1768px;top:731px;height:85px"></div>
<div class="a rs" style="left:1968px;top:731px;height:85px"></div>
<div class="a rs" style="left:2168px;top:731px;height:85px"></div>
<div class="a rs" style="left:2368px;top:731px;height:85px"></div>
<div class="a c" style="left:390px;top:742px;letter-spacing:0.5px;">02/27 22:55:03</div>
<div class="a c" style="left:580px;top:742px;letter-spacing:-1.2px;">success</div>
<div class="a c" style="left:780px;top:742px;">login</div>
<div class="a c" style="left:980px;top:742px;">gateway-register</div>
<div class="a c" style="left:1180px;top:742px;">qalab</div>
<div class="a c" style="left:1380px;top:742px;letter-spacing:0.25px;">10.0.0.0-<br>10.255.255.255</div>
<div class="a c" style="left:1580px;top:742px;letter-spacing:-0.6px;">GPCLIENT2</div>
<div class="a c" style="left:1780px;top:742px;letter-spacing:0.2px;">10.124.168.175</div>
<div class="a c" style="left:1980px;top:742px;letter-spacing:-0.3px;">0.0.0.0</div>
<div class="a c" style="left:2180px;top:742px;letter-spacing:0.45px;">291d6831-7393-<br>477b-a0b9-<br>ea12bca1bc42</div>
<div class="a row" style="top:819px;background:#ffffff"></div>
<div class="a rb" style="top:907px"></div>
<div class="a rs" style="left:568px;top:821px;height:85px"></div>
<div class="a rs" style="left:768px;top:821px;height:85px"></div>
<div class="a rs" style="left:968px;top:821px;height:85px"></div>
<div class="a rs" style="left:1168px;top:821px;height:85px"></div>
<div class="a rs" style="left:1368px;top:821px;height:85px"></div>
<div class="a rs" style="left:1568px;top:821px;height:85px"></div>
<div class="a rs" style="left:1768px;top:821px;height:85px"></div>
<div class="a rs" style="left:1968px;top:821px;height:85px"></div>
<div class="a rs" style="left:2168px;top:821px;height:85px"></div>
<div class="a rs" style="left:2368px;top:821px;height:85px"></div>
<div class="a c" style="left:390px;top:832px;letter-spacing:0.5px;">02/27 22:55:03</div>
<div class="a c" style="left:580px;top:832px;letter-spacing:-1.2px;">success</div>
<div class="a c" style="left:780px;top:832px;">login</div>
<div class="a c" style="left:980px;top:832px;">gateway-auth</div>
<div class="a c" style="left:1180px;top:832px;">qalab</div>
<div class="a c" style="left:1380px;top:832px;letter-spacing:0.25px;">10.0.0.0-<br>10.255.255.255</div>
<div class="a c" style="left:1580px;top:832px;letter-spacing:-0.6px;">GPCLIENT2</div>
<div class="a c" style="left:1780px;top:832px;letter-spacing:0.2px;">10.124.168.175</div>
<div class="a c" style="left:1980px;top:832px;letter-spacing:-0.3px;">0.0.0.0</div>
<div class="a c" style="left:2180px;top:832px;letter-spacing:0.45px;">291d6831-7393-<br>477b-a0b9-<br>ea12bca1bc42</div>
<div class="a c" style="left:2380px;top:832px;">none</div>
<div class="a row" style="top:909px;background:#eff4f7"></div>
<div class="a rb" style="top:997px"></div>
<div class="a rs" style="left:568px;top:911px;height:85px"></div>
<div class="a rs" style="left:768px;top:911px;height:85px"></div>
<div class="a rs" style="left:968px;top:911px;height:85px"></div>
<div class="a rs" style="left:1168px;top:911px;height:85px"></div>
<div class="a rs" style="left:1368px;top:911px;height:85px"></div>
<div class="a rs" style="left:1568px;top:911px;height:85px"></div>
<div class="a rs" style="left:1768px;top:911px;height:85px"></div>
<div class="a rs" style="left:1968px;top:911px;height:85px"></div>
<div class="a rs" style="left:2168px;top:911px;height:85px"></div>
<div class="a rs" style="left:2368px;top:911px;height:85px"></div>
<div class="a c" style="left:390px;top:922px;letter-spacing:0.5px;">02/27 22:55:03</div>
<div class="a c" style="left:580px;top:922px;letter-spacing:-1.2px;">success</div>
<div class="a c" style="left:780px;top:922px;">before-login</div>
<div class="a c" style="left:980px;top:922px;">gateway-prelogin</div>
<div class="a c" style="left:1380px;top:922px;letter-spacing:0.25px;">10.0.0.0-<br>10.255.255.255</div>
<div class="a c" style="left:1780px;top:922px;letter-spacing:0.2px;">10.124.168.175</div>
<div class="a c" style="left:1980px;top:922px;letter-spacing:-0.3px;">0.0.0.0</div>
<div class="a c" style="left:2180px;top:922px;letter-spacing:0.45px;">291d6831-7393-<br>477b-a0b9-<br>ea12bca1bc42</div>
<div class="a row" style="top:999px;background:#ffffff"></div>
<div class="a rb" style="top:1087px"></div>
<div class="a rs" style="left:568px;top:1001px;height:85px"></div>
<div class="a rs" style="left:768px;top:1001px;height:85px"></div>
<div class="a rs" style="left:968px;top:1001px;height:85px"></div>
<div class="a rs" style="left:1168px;top:1001px;height:85px"></div>
<div class="a rs" style="left:1368px;top:1001px;height:85px"></div>
<div class="a rs" style="left:1568px;top:1001px;height:85px"></div>
<div class="a rs" style="left:1768px;top:1001px;height:85px"></div>
<div class="a rs" style="left:1968px;top:1001px;height:85px"></div>
<div class="a rs" style="left:2168px;top:1001px;height:85px"></div>
<div class="a rs" style="left:2368px;top:1001px;height:85px"></div>
<div class="a c" style="left:390px;top:1012px;letter-spacing:0.5px;">02/27 22:55:03</div>
<div class="a c" style="left:580px;top:1012px;letter-spacing:-1.2px;">success</div>
<div class="a c" style="left:780px;top:1012px;">configuration</div>
<div class="a c" style="left:980px;top:1012px;">portal-getconfig</div>
<div class="a c" style="left:1180px;top:1012px;">qalab</div>
<div class="a c" style="left:1380px;top:1012px;letter-spacing:0.25px;">10.0.0.0-<br>10.255.255.255</div>
<div class="a c" style="left:1580px;top:1012px;letter-spacing:-0.6px;">GPCLIENT2</div>
<div class="a c" style="left:1780px;top:1012px;letter-spacing:0.2px;">10.124.168.175</div>
<div class="a c" style="left:1980px;top:1012px;letter-spacing:-0.3px;">0.0.0.0</div>
<div class="a c" style="left:2180px;top:1012px;letter-spacing:0.45px;">291d6831-7393-<br>477b-a0b9-<br>ea12bca1bc42</div>
<div class="a c" style="left:2380px;top:1012px;">none</div>
<div class="a row" style="top:1089px;background:#eff4f7"></div>
<div class="a rb" style="top:1177px"></div>
<div class="a rs" style="left:568px;top:1091px;height:85px"></div>
<div class="a rs" style="left:768px;top:1091px;height:85px"></div>
<div class="a rs" style="left:968px;top:1091px;height:85px"></div>
<div class="a rs" style="left:1168px;top:1091px;height:85px"></div>
<div class="a rs" style="left:1368px;top:1091px;height:85px"></div>
<div class="a rs" style="left:1568px;top:1091px;height:85px"></div>
<div class="a rs" style="left:1768px;top:1091px;height:85px"></div>
<div class="a rs" style="left:1968px;top:1091px;height:85px"></div>
<div class="a rs" style="left:2168px;top:1091px;height:85px"></div>
<div class="a rs" style="left:2368px;top:1091px;height:85px"></div>
<div class="a c" style="left:390px;top:1102px;letter-spacing:0.5px;">02/27 22:55:03</div>
<div class="a c" style="left:580px;top:1102px;letter-spacing:-1.2px;">success</div>
<div class="a c" style="left:780px;top:1102px;">login</div>
<div class="a c" style="left:980px;top:1102px;">portal-auth</div>
<div class="a c" style="left:1180px;top:1102px;">qalab</div>
<div class="a c" style="left:1380px;top:1102px;letter-spacing:0.25px;">10.0.0.0-<br>10.255.255.255</div>
<div class="a c" style="left:1580px;top:1102px;letter-spacing:-0.6px;">GPCLIENT2</div>
<div class="a c" style="left:1780px;top:1102px;letter-spacing:0.2px;">10.124.168.175</div>
<div class="a c" style="left:1980px;top:1102px;letter-spacing:-0.3px;">0.0.0.0</div>
<div class="a c" style="left:2180px;top:1102px;letter-spacing:0.45px;">291d6831-7393-<br>477b-a0b9-<br>ea12bca1bc42</div>
<div class="a c" style="left:2380px;top:1102px;">none</div>
<div class="a row" style="top:1179px;background:#ffffff"></div>
<div class="a rb" style="top:1267px"></div>
<div class="a rs" style="left:568px;top:1181px;height:85px"></div>
<div class="a rs" style="left:768px;top:1181px;height:85px"></div>
<div class="a rs" style="left:968px;top:1181px;height:85px"></div>
<div class="a rs" style="left:1168px;top:1181px;height:85px"></div>
<div class="a rs" style="left:1368px;top:1181px;height:85px"></div>
<div class="a rs" style="left:1568px;top:1181px;height:85px"></div>
<div class="a rs" style="left:1768px;top:1181px;height:85px"></div>
<div class="a rs" style="left:1968px;top:1181px;height:85px"></div>
<div class="a rs" style="left:2168px;top:1181px;height:85px"></div>
<div class="a rs" style="left:2368px;top:1181px;height:85px"></div>
<div class="a c" style="left:390px;top:1192px;letter-spacing:0.5px;">02/27 22:55:03</div>
<div class="a c" style="left:580px;top:1192px;letter-spacing:-1.2px;">success</div>
<div class="a c" style="left:780px;top:1192px;">before-login</div>
<div class="a c" style="left:980px;top:1192px;">portal-prelogin</div>
<div class="a c" style="left:1380px;top:1192px;letter-spacing:0.25px;">10.0.0.0-<br>10.255.255.255</div>
<div class="a c" style="left:1780px;top:1192px;letter-spacing:0.2px;">10.124.168.175</div>
<div class="a c" style="left:1980px;top:1192px;letter-spacing:-0.3px;">0.0.0.0</div>
<div class="a c" style="left:2180px;top:1192px;letter-spacing:0.45px;">291d6831-7393-<br>477b-a0b9-<br>ea12bca1bc42</div>
<div class="a row" style="top:1269px;background:#eff4f7"></div>
<div class="a rb" style="top:1357px"></div>
<div class="a rs" style="left:568px;top:1271px;height:85px"></div>
<div class="a rs" style="left:768px;top:1271px;height:85px"></div>
<div class="a rs" style="left:968px;top:1271px;height:85px"></div>
<div class="a rs" style="left:1168px;top:1271px;height:85px"></div>
<div class="a rs" style="left:1368px;top:1271px;height:85px"></div>
<div class="a rs" style="left:1568px;top:1271px;height:85px"></div>
<div class="a rs" style="left:1768px;top:1271px;height:85px"></div>
<div class="a rs" style="left:1968px;top:1271px;height:85px"></div>
<div class="a rs" style="left:2168px;top:1271px;height:85px"></div>
<div class="a rs" style="left:2368px;top:1271px;height:85px"></div>
<div class="a c" style="left:390px;top:1282px;letter-spacing:0.5px;">02/27 22:55:02</div>
<div class="a c" style="left:580px;top:1282px;letter-spacing:-1.2px;">success</div>
<div class="a c" style="left:780px;top:1282px;">logout</div>
<div class="a c" style="left:980px;top:1282px;">gateway-logout</div>
<div class="a c" style="left:1180px;top:1282px;">qalab</div>
<div class="a c" style="left:1380px;top:1282px;letter-spacing:0.25px;">10.0.0.0-<br>10.255.255.255</div>
<div class="a c" style="left:1580px;top:1282px;letter-spacing:-0.6px;">GPCLIENT2</div>
<div class="a c" style="left:1780px;top:1282px;letter-spacing:0.2px;">10.124.168.175</div>
<div class="a c" style="left:1980px;top:1282px;letter-spacing:-0.3px;">0.0.0.0</div>
<div class="a c" style="left:2180px;top:1282px;letter-spacing:0.45px;">291d6831-7393-<br>477b-a0b9-<br>ea12bca1bc42</div>
<div class="a row" style="top:1359px;background:#ffffff"></div>
<div class="a rb" style="top:1447px"></div>
<div class="a rs" style="left:568px;top:1361px;height:85px"></div>
<div class="a rs" style="left:768px;top:1361px;height:85px"></div>
<div class="a rs" style="left:968px;top:1361px;height:85px"></div>
<div class="a rs" style="left:1168px;top:1361px;height:85px"></div>
<div class="a rs" style="left:1368px;top:1361px;height:85px"></div>
<div class="a rs" style="left:1568px;top:1361px;height:85px"></div>
<div class="a rs" style="left:1768px;top:1361px;height:85px"></div>
<div class="a rs" style="left:1968px;top:1361px;height:85px"></div>
<div class="a rs" style="left:2168px;top:1361px;height:85px"></div>
<div class="a rs" style="left:2368px;top:1361px;height:85px"></div>
<div class="a c" style="left:390px;top:1372px;letter-spacing:0.5px;">02/27 22:55:02</div>
<div class="a c" style="left:580px;top:1372px;letter-spacing:-1.2px;">success</div>
<div class="a c" style="left:780px;top:1372px;">configuration</div>
<div class="a c" style="left:980px;top:1372px;">gateway-config-<br>release</div>
<div class="a c" style="left:1180px;top:1372px;">qalab</div>
<div class="a c" style="left:1380px;top:1372px;letter-spacing:0.25px;">10.0.0.0-<br>10.255.255.255</div>
<div class="a c" style="left:1580px;top:1372px;letter-spacing:-0.6px;">GPCLIENT2</div>
<div class="a c" style="left:1780px;top:1372px;letter-spacing:0.2px;">10.124.168.175</div>
<div class="a c" style="left:1980px;top:1372px;letter-spacing:-0.3px;">0.0.0.0</div>
<div class="a c" style="left:2180px;top:1372px;letter-spacing:0.45px;">291d6831-7393-<br>477b-a0b9-<br>ea12bca1bc42</div>
<div class="a row" style="top:1449px;background:#eff4f7"></div>
<div class="a rb" style="top:1537px"></div>
<div class="a rs" style="left:568px;top:1451px;height:85px"></div>
<div class="a rs" style="left:768px;top:1451px;height:85px"></div>
<div class="a rs" style="left:968px;top:1451px;height:85px"></div>
<div class="a rs" style="left:1168px;top:1451px;height:85px"></div>
<div class="a rs" style="left:1368px;top:1451px;height:85px"></div>
<div class="a rs" style="left:1568px;top:1451px;height:85px"></div>
<div class="a rs" style="left:1768px;top:1451px;height:85px"></div>
<div class="a rs" style="left:1968px;top:1451px;height:85px"></div>
<div class="a rs" style="left:2168px;top:1451px;height:85px"></div>
<div class="a rs" style="left:2368px;top:1451px;height:85px"></div>
<div class="a c" style="left:390px;top:1462px;letter-spacing:0.5px;">02/27 22:54:52</div>
<div class="a c" style="left:580px;top:1462px;letter-spacing:-1.2px;">success</div>
<div class="a c" style="left:780px;top:1462px;">configuration</div>
<div class="a c" style="left:980px;top:1462px;">gateway-getconfig</div>
<div class="a c" style="left:1180px;top:1462px;">qalab</div>
<div class="a c" style="left:1380px;top:1462px;letter-spacing:0.25px;">10.0.0.0-<br>10.255.255.255</div>
<div class="a c" style="left:1580px;top:1462px;letter-spacing:-0.6px;">GPCLIENT2</div>
<div class="a c" style="left:1780px;top:1462px;letter-spacing:0.2px;">10.124.168.175</div>
<div class="a c" style="left:1980px;top:1462px;letter-spacing:-0.3px;">0.0.0.0</div>
<div class="a c" style="left:2180px;top:1462px;letter-spacing:0.45px;">291d6831-7393-<br>477b-a0b9-<br>ea12bca1bc42</div>
<div class="a row" style="top:1539px;background:#ffffff"></div>
<div class="a rb" style="top:1627px"></div>
<div class="a rs" style="left:568px;top:1541px;height:85px"></div>
<div class="a rs" style="left:768px;top:1541px;height:85px"></div>
<div class="a rs" style="left:968px;top:1541px;height:85px"></div>
<div class="a rs" style="left:1168px;top:1541px;height:85px"></div>
<div class="a rs" style="left:1368px;top:1541px;height:85px"></div>
<div class="a rs" style="left:1568px;top:1541px;height:85px"></div>
<div class="a rs" style="left:1768px;top:1541px;height:85px"></div>
<div class="a rs" style="left:1968px;top:1541px;height:85px"></div>
<div class="a rs" style="left:2168px;top:1541px;height:85px"></div>
<div class="a rs" style="left:2368px;top:1541px;height:85px"></div>
<div class="a c" style="left:390px;top:1552px;letter-spacing:0.5px;">02/27 22:54:52</div>
<div class="a c" style="left:580px;top:1552px;letter-spacing:-1.2px;">success</div>
<div class="a c" style="left:780px;top:1552px;">login</div>
<div class="a c" style="left:980px;top:1552px;">gateway-register</div>
<div class="a c" style="left:1180px;top:1552px;">qalab</div>
<div class="a c" style="left:1380px;top:1552px;letter-spacing:0.25px;">10.0.0.0-<br>10.255.255.255</div>
<div class="a c" style="left:1580px;top:1552px;letter-spacing:-0.6px;">GPCLIENT2</div>
<div class="a c" style="left:1780px;top:1552px;letter-spacing:0.2px;">10.124.168.175</div>
<div class="a c" style="left:1980px;top:1552px;letter-spacing:-0.3px;">0.0.0.0</div>
<div class="a c" style="left:2180px;top:1552px;letter-spacing:0.45px;">291d6831-7393-<br>477b-a0b9-<br>ea12bca1bc42</div>
<div class="a row" style="top:1629px;background:#eff4f7"></div>
<div class="a rb" style="top:1717px"></div>
<div class="a rs" style="left:568px;top:1631px;height:85px"></div>
<div class="a rs" style="left:768px;top:1631px;height:85px"></div>
<div class="a rs" style="left:968px;top:1631px;height:85px"></div>
<div class="a rs" style="left:1168px;top:1631px;height:85px"></div>
<div class="a rs" style="left:1368px;top:1631px;height:85px"></div>
<div class="a rs" style="left:1568px;top:1631px;height:85px"></div>
<div class="a rs" style="left:1768px;top:1631px;height:85px"></div>
<div class="a rs" style="left:1968px;top:1631px;height:85px"></div>
<div class="a rs" style="left:2168px;top:1631px;height:85px"></div>
<div class="a rs" style="left:2368px;top:1631px;height:85px"></div>
<div class="a c" style="left:390px;top:1642px;letter-spacing:0.5px;">02/27 22:54:52</div>
<div class="a c" style="left:580px;top:1642px;letter-spacing:-1.2px;">success</div>
<div class="a c" style="left:780px;top:1642px;">login</div>
<div class="a c" style="left:980px;top:1642px;">gateway-auth</div>
<div class="a c" style="left:1180px;top:1642px;">qalab</div>
<div class="a c" style="left:1380px;top:1642px;letter-spacing:0.25px;">10.0.0.0-<br>10.255.255.255</div>
<div class="a c" style="left:1580px;top:1642px;letter-spacing:-0.6px;">GPCLIENT2</div>
<div class="a c" style="left:1780px;top:1642px;letter-spacing:0.2px;">10.124.168.175</div>
<div class="a c" style="left:1980px;top:1642px;letter-spacing:-0.3px;">0.0.0.0</div>
<div class="a c" style="left:2180px;top:1642px;letter-spacing:0.45px;">291d6831-7393-<br>477b-a0b9-<br>ea12bca1bc42</div>
<div class="a c" style="left:2380px;top:1642px;">none</div>
<div class="a row" style="top:1719px;background:#ffffff"></div>
<div class="a rb" style="top:1807px"></div>
<div class="a rs" style="left:568px;top:1721px;height:85px"></div>
<div class="a rs" style="left:768px;top:1721px;height:85px"></div>
<div class="a rs" style="left:968px;top:1721px;height:85px"></div>
<div class="a rs" style="left:1168px;top:1721px;height:85px"></div>
<div class="a rs" style="left:1368px;top:1721px;height:85px"></div>
<div class="a rs" style="left:1568px;top:1721px;height:85px"></div>
<div class="a rs" style="left:1768px;top:1721px;height:85px"></div>
<div class="a rs" style="left:1968px;top:1721px;height:85px"></div>
<div class="a rs" style="left:2168px;top:1721px;height:85px"></div>
<div class="a rs" style="left:2368px;top:1721px;height:85px"></div>
<div class="a c" style="left:390px;top:1732px;letter-spacing:0.5px;">02/27 22:54:52</div>
<div class="a c" style="left:580px;top:1732px;letter-spacing:-1.2px;">success</div>
<div class="a c" style="left:780px;top:1732px;">before-login</div>
<div class="a c" style="left:980px;top:1732px;">gateway-prelogin</div>
<div class="a c" style="left:1380px;top:1732px;letter-spacing:0.25px;">10.0.0.0-<br>10.255.255.255</div>
<div class="a c" style="left:1780px;top:1732px;letter-spacing:0.2px;">10.124.168.175</div>
<div class="a c" style="left:1980px;top:1732px;letter-spacing:-0.3px;">0.0.0.0</div>
<div class="a c" style="left:2180px;top:1732px;letter-spacing:0.45px;">291d6831-7393-<br>477b-a0b9-<br>ea12bca1bc42</div>
<div class="a row" style="top:1809px;background:#eff4f7"></div>
<div class="a rb" style="top:1897px"></div>
<div class="a rs" style="left:568px;top:1811px;height:85px"></div>
<div class="a rs" style="left:768px;top:1811px;height:85px"></div>
<div class="a rs" style="left:968px;top:1811px;height:85px"></div>
<div class="a rs" style="left:1168px;top:1811px;height:85px"></div>
<div class="a rs" style="left:1368px;top:1811px;height:85px"></div>
<div class="a rs" style="left:1568px;top:1811px;height:85px"></div>
<div class="a rs" style="left:1768px;top:1811px;height:85px"></div>
<div class="a rs" style="left:1968px;top:1811px;height:85px"></div>
<div class="a rs" style="left:2168px;top:1811px;height:85px"></div>
<div class="a rs" style="left:2368px;top:1811px;height:85px"></div>
<div class="a c" style="left:390px;top:1822px;letter-spacing:0.5px;">02/27 22:54:51</div>
<div class="a c" style="left:580px;top:1822px;letter-spacing:-1.2px;">success</div>
<div class="a c" style="left:780px;top:1822px;">configuration</div>
<div class="a c" style="left:980px;top:1822px;">portal-getconfig</div>
<div class="a c" style="left:1180px;top:1822px;">qalab</div>
<div class="a c" style="left:1380px;top:1822px;letter-spacing:0.25px;">10.0.0.0-<br>10.255.255.255</div>
<div class="a c" style="left:1580px;top:1822px;letter-spacing:-0.6px;">GPCLIENT2</div>
<div class="a c" style="left:1780px;top:1822px;letter-spacing:0.2px;">10.124.168.175</div>
<div class="a c" style="left:1980px;top:1822px;letter-spacing:-0.3px;">0.0.0.0</div>
<div class="a c" style="left:2180px;top:1822px;letter-spacing:0.45px;">291d6831-7393-<br>477b-a0b9-<br>ea12bca1bc42</div>
<div class="a c" style="left:2380px;top:1822px;">none</div>
<div class="a" style="left:378px;top:1888px;width:2118px;height:2px;background:#c6c8cb"></div>
<svg class="a" style="left:380px;top:1022px" width="8" height="70" viewBox="0 0 8 70"><path d="M0 8 L7.5 0 L7.5 70 L0 62 Z" fill="#f3f3f3" stroke="#e2e2e2" stroke-width="1"/><path d="M1 34.5 L6.5 29 L6.5 40 Z" fill="#999"/></svg>
</div>
</body></html>
